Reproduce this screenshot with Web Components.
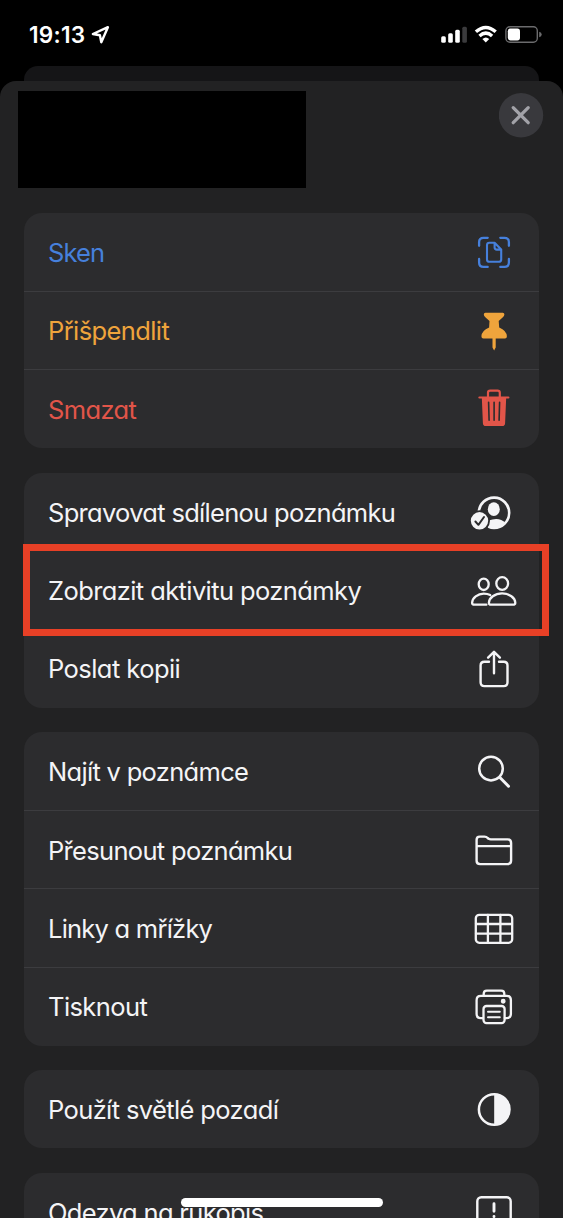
<!DOCTYPE html>
<html lang="cs">
<head>
<meta charset="utf-8">
<meta name="viewport" content="width=device-width, initial-scale=1">
<title>Poznámky</title>
<style>
html, body { margin: 0; height: 100%; background: #000; overflow: hidden; }
body { font-family: Inter, "Liberation Sans", sans-serif; color: #f5f5f7; }
</style>
</head>
<body>
<note-screen></note-screen>

<script>
const ICONS = {
  scan: `<g stroke-width="2.3"><path d="M-14.9-6.2v-3.6q0-4.4 4.4-4.4h4.2M6.3-14.2h4.2q4.4 0 4.4 4.4v3.6M14.9 6.9v3.6q0 4.4-4.4 4.4H6.3M-6.3 14.9h-4.2q-4.4 0-4.4-4.4V6.9"/><path d="M-4.6-9.2H.6L7.2-2.4V7.4Q7.2 9.8 4.8 9.8H-4.6Q-7 9.8-7 7.4V-6.8Q-7-9.2-4.6-9.2ZM.6-9v4.4q0 2.2 2.2 2.2h4.4" stroke-width="2.1"/></g>`,
  pin: `<path fill="currentColor" stroke="none" d="M-8.6-18.2H8.8q1.6 0 1.6 1.6 0 1.5-1.8 3.2L4.7-10 5.2-3.6Q12.6-.6 12.9 5.3 12.9 7.5 11 7.5H1.7V16.5L.1 19.4-1.5 16.5V7.5H-10.6Q-12.6 7.5-12.6 5.3-12.3-.6-4.9-3.6L-4.5-10-8.4-13.4Q-10.2-15-10.2-16.6-10.2-18.2-8.6-18.2Z"/>`,
  trash: `<path stroke-width="2.2" d="M-14.6-11.5H14.4M-6-12v-4.2q0-2.2 2.2-2.2h7.4q2.2 0 2.2 2.2v4.2"/><path fill="currentColor" stroke="none" d="M-12.2-11.7H12.2L11.1 14.2Q11 17 8.2 17H-8.2Q-11 17-11.1 14.2Z"/><path stroke="#2c2c2e" stroke-width="1.6" d="M-5.4-6.7-4.9 11.3M.1-6.7v18M5.6-6.7 5.1 11.3"/>`,
  shared: `<path stroke-width="2.6" d="M-15.2 .3A15.2 15.2 0 1 1 0 16Q-3 16-5 14.8"/><ellipse cx="-.2" cy="-2.8" rx="6" ry="6.9" fill="currentColor" stroke="none"/><path fill="currentColor" stroke="none" d="M-5.5 8.6Q5.5 4.4 11.4 11.2 5.5 17.2-1 16.7L-6 15Z"/><circle cx="-14.5" cy="8.8" r="10.5" fill="#2c2c2e" stroke="none"/><circle cx="-14.5" cy="8.8" r="8.7" fill="currentColor" stroke="none"/><path stroke="#2c2c2e" stroke-width="2" d="m-18.6 9.5 3 3.3 5.6-7.8"/>`,
  people: `<g stroke-width="2.3"><ellipse cx="-10.3" cy="-5.7" rx="5" ry="5.7"/><ellipse cx="8.2" cy="-6.5" rx="5.9" ry="6.3"/><path d="M-7.6 14.7H-19.5Q-21.9 14.7-21.9 12.7C-21.7 8.2-16.3 3.6-10.3 3.6Q-6.5 3.6-3.8 5.1"/><path d="M-3 14.7H19Q21.3 14.7 21.3 12.7C21.1 8 15.5 3.4 8.1 3.4S-4.9 8-5.1 12.7Q-5.1 14.7-3 14.7Z"/></g>`,
  share: `<path d="M-5-7.3h-4.6q-3.8 0-3.8 3.8v16.8q0 3.8 3.8 3.8H9.7q3.8 0 3.8-3.8v-16.8q0-3.8-3.8-3.8H5M0 4.2V-17M-5.9-11.3 0-17.2 5.9-11.3"/>`,
  search: `<circle cx="-3" cy="-2.4" r="11.8" stroke-width="2.5"/><path stroke-width="3" d="M5.9 6.5 14.5 15.2"/>`,
  folder: `<path d="M-17.4 10.8V-10.2Q-17.4-13.4-14.2-13.4H-9.5Q-7.6-13.4-6.3-12L-5.4-11.2Q-4.5-10.6-3.2-10.6H13.6Q17.1-10.6 17.1-7.1V10.6Q17.1 14.1 13.6 14.1H-13.9Q-17.4 14.1-17.4 10.8ZM-17.1-3.9H16.8"/>`,
  grid: `<g stroke-width="2.3"><rect x="-18.2" y="-13.2" width="36.4" height="28" rx="3.5"/><path d="M-6.1-13.1V14.7M6.4-13.1V14.7M-18-4H18M-18 5.6H18"/></g>`,
  printer: `<g stroke-width="2.3"><path d="M-10.3-10.3v-1.9q0-3.1 3.1-3.1H7.2q3.1 0 3.1 3.1v1.9M-11 12.1h-2.4q-4-.1-4-4V-5.8q0-4.3 4.3-4.3H12.7q4.2 0 4.2 4.3V8.1q0 3.9-4 4H10.8"/><rect x="-10.5" y="0" width="21.1" height="17.1" rx="3"/><path stroke-width="2" d="M-6 5.7H5.8M-6 11.3H5.8"/><circle cx="9.2" cy="-4.8" r="1.3" fill="currentColor"/></g>`,
  contrast: `<circle cx=".2" cy=".5" r="15.3" stroke-width="2.5"/><path fill="currentColor" stroke="none" d="M.2-15.3A15.7 15.7 0 0 1 .2 16.2Z"/>`,
  feedback: `<rect x="-16.7" y="-14.8" width="33.4" height="33" rx="4"/><path stroke-width="2.9" d="M0-8.2V-.8M0 4.4v.2"/>`
};

function define(name, markup, setup) {
  const template = document.createElement('template');
  template.innerHTML = markup;
  customElements.define(name, class extends HTMLElement {
    connectedCallback() {
      if (this.shadowRoot) return;
      this.attachShadow({ mode: 'open' }).append(template.content.cloneNode(true));
      if (setup) setup(this, this.shadowRoot);
    }
  });
}

define('menu-icon', `<style>
:host { display: block; width: 60px; height: 60px; flex: none; }
svg { display: block; overflow: visible; }
</style>
<svg width="60" height="60" viewBox="-30 -30 60 60" fill="none" stroke="currentColor" stroke-width="2.4" stroke-linecap="round" stroke-linejoin="round"></svg>`,
(host, root) => { root.querySelector('svg').innerHTML = ICONS[host.getAttribute('name')] || ''; });

// Tracking is tuned so each label spans the width given in its "measure" attribute.
define('menu-row', `<style>
:host { position: relative; display: flex; align-items: center; justify-content: space-between; box-sizing: border-box; height: 78.4px; padding: 0 15px 0 24px; color: #f4f4f6; }
:host([tone="blue"]) { color: #4680dc; }
:host([tone="amber"]) { color: #efa43c; }
:host([tone="red"]) { color: #e25549; }
:host(:not(:last-child))::after { content: ""; position: absolute; left: 0; right: 0; bottom: -0.5px; height: 1px; background: #3c3c3f; }
.label { font-size: 25.5px; line-height: 32px; padding-top: 1.6px; white-space: nowrap; font-feature-settings: "cv11"; }
</style>
<span class="label"><slot></slot></span><menu-icon></menu-icon>`,
(host, root) => {
  const label = root.querySelector('.label');
  const target = Number(host.getAttribute('measure')) + 1.2;
  const natural = label.getBoundingClientRect().width;
  label.style.letterSpacing = ((target - natural) / host.textContent.length).toFixed(3) + 'px';
  const icon = root.querySelector('menu-icon');
  icon.shadowRoot.querySelector('svg').innerHTML = ICONS[host.getAttribute('icon')];
});

define('menu-group', `<style>
:host { display: block; flex: none; border-radius: 18px; background: #2c2c2e; }
</style><slot></slot>`);

define('highlight-frame', `<style>
:host { position: absolute; box-sizing: border-box; left: 22.6px; top: 543.5px; width: 526px; height: 92px; border: 7px solid #e84026; pointer-events: none; }
</style>`);

define('status-bar', `<style>
:host { display: flex; align-items: center; justify-content: space-between; box-sizing: border-box; height: 66px; padding: 4px 21px 0 29px; color: #fff; }
.left, .right { display: flex; align-items: center; }
.time { font-size: 22.6px; font-weight: 600; line-height: 28px; letter-spacing: .25px; width: 61px; white-space: nowrap; }
svg { display: block; }
</style>
<div class="left"><span class="time">19:13</span>
<svg width="20" height="20" viewBox="0 0 20 20" fill="none" stroke="#fff" stroke-width="2.4" stroke-linejoin="round"><path d="M17.9 2.2 11.3 17.2 9.9 10.3 2.9 9Z"/></svg></div>
<div class="right"><svg width="102" height="20" viewBox="440 25 102 20">
<g fill="#fff"><rect x="441.2" y="36.2" width="4.6" height="6.6" rx="1.5"/><rect x="448.2" y="33.3" width="4.6" height="9.5" rx="1.5"/><rect x="455.2" y="29.8" width="4.6" height="13" rx="1.5"/></g>
<rect x="462.3" y="26.7" width="4.6" height="16.1" rx="1.5" fill="#3b3b3d"/>
<path d="M475.9 31.8Q485.8 23 495.7 31.8M479.5 36Q485.8 30.3 492.1 36" fill="none" stroke="#fff" stroke-width="3.4"/><path d="M485.8 42.6 482.4 39Q485.8 36 489.2 39Z" fill="#fff"/>
<rect x="505.9" y="26.8" width="31.4" height="15.4" rx="4" fill="none" stroke="#6b6b6d" stroke-width="1.4"/><rect x="507.8" y="28.6" width="12.2" height="11.8" rx="2.6" fill="#fff"/><path d="M539.2 31.8Q541.7 32.5 541.7 34.5T539.2 37.2Z" fill="#6b6b6d"/></svg></div>`);

define('close-button', `<style>
:host { display: block; width: 45px; height: 45px; }
svg { display: block; }
</style><svg width="45" height="45" viewBox="0 0 45 45"><circle cx="22" cy="22.2" r="22.2" fill="#39393d"/><path d="m14.2 14.7 15 15m0-15-15 15" stroke="#a2a2a8" stroke-width="3.3" stroke-linecap="round"/></svg>`);

define('note-screen', `<style>
:host { position: relative; display: flex; flex-direction: column; width: 563px; height: 1218px; background: #000; overflow: hidden; }
.behind { flex: none; height: 15px; margin: 0 24px; border-radius: 14px 14px 0 0; background: #151517; }
.sheet { flex: 1; min-height: 0; border-radius: 16px 16px 0 0; background: #222223; overflow: hidden; }
header { display: flex; justify-content: space-between; box-sizing: border-box; height: 132px; padding: 10.4px 19px 0 18.4px; }
.preview { width: 288px; height: 97px; background: #000; }
close-button { margin-top: 1.6px; }
.groups { display: flex; flex-direction: column; gap: 24.4px; padding: 0 24px; }
.home { position: absolute; left: 181px; top: 1198px; width: 202px; height: 8.6px; border-radius: 5px; background: #fff; }
</style>
<status-bar></status-bar>
<div class="behind"></div>
<div class="sheet">
<header><div class="preview"></div><close-button></close-button></header>
<div class="groups">
<menu-group>
<menu-row icon="scan" tone="blue" measure="55">Sken</menu-row>
<menu-row icon="pin" tone="amber" measure="120">Přišpendlit</menu-row>
<menu-row icon="trash" tone="red" measure="87">Smazat</menu-row>
</menu-group>
<menu-group>
<menu-row icon="shared" measure="346">Spravovat sdílenou poznámku</menu-row>
<menu-row icon="people" measure="312">Zobrazit aktivitu poznámky</menu-row>
<menu-row icon="share" measure="131">Poslat kopii</menu-row>
</menu-group>
<menu-group>
<menu-row icon="search" measure="199">Najít v poznámce</menu-row>
<menu-row icon="folder" measure="243">Přesunout poznámku</menu-row>
<menu-row icon="grid" measure="163">Linky a mřížky</menu-row>
<menu-row icon="printer" measure="98">Tisknout</menu-row>
</menu-group>
<menu-group>
<menu-row icon="contrast" measure="229">Použít světlé pozadí</menu-row>
</menu-group>
<menu-group>
<menu-row icon="feedback" measure="214">Odezva na rukopis</menu-row>
</menu-group>
</div>
</div>
<highlight-frame></highlight-frame>
<div class="home"></div>`);
</script>
</body>
</html>
